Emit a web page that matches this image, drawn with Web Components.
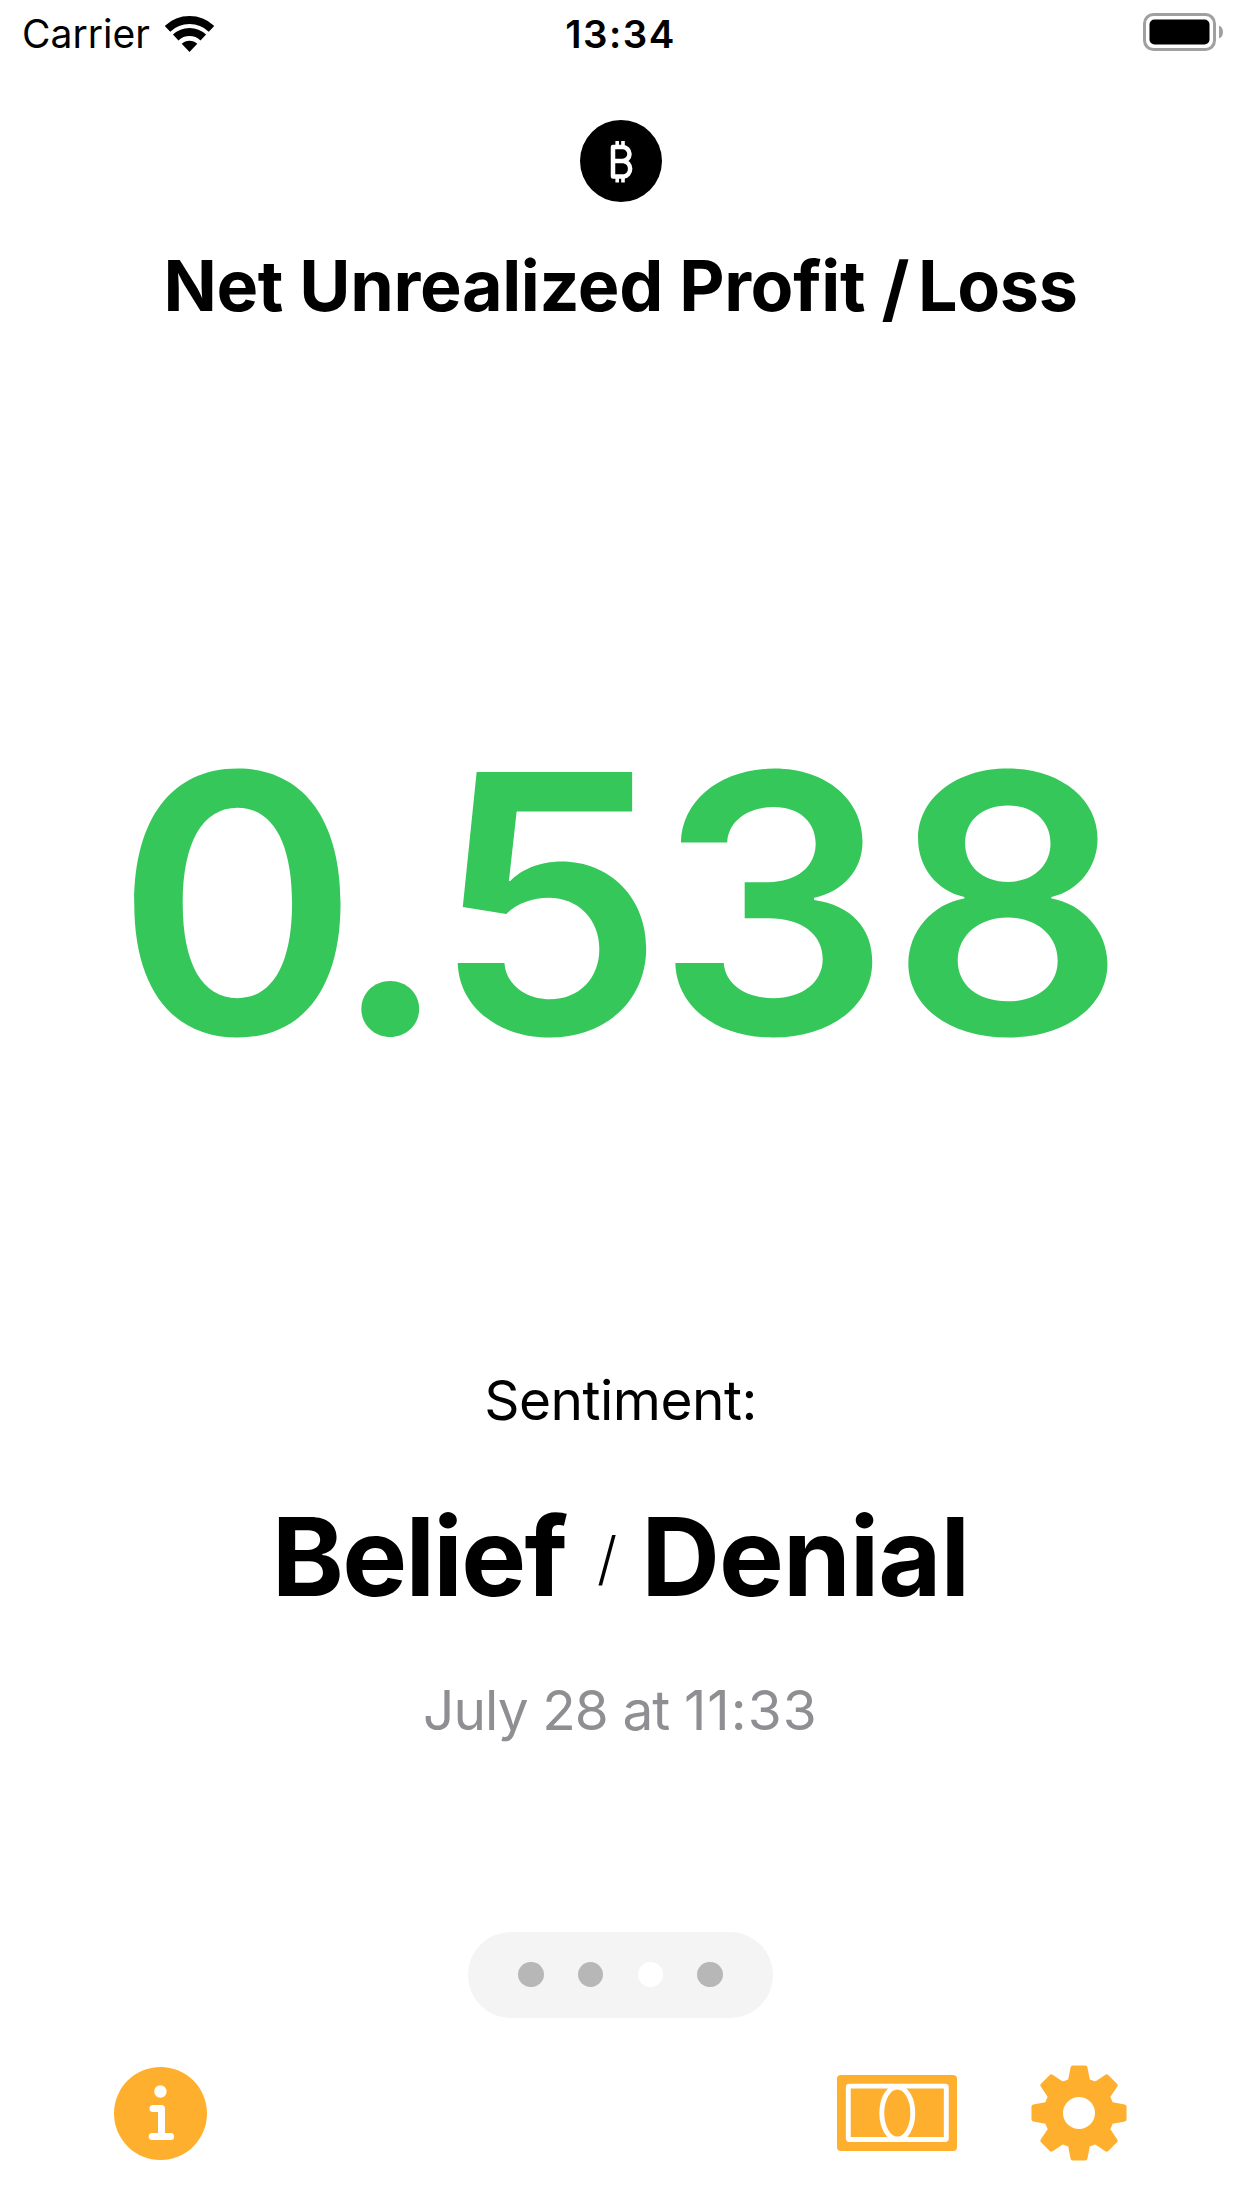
<!DOCTYPE html>
<html lang="en">
<head>
<meta charset="utf-8">
<title>Net Unrealized Profit / Loss</title>
<style>
  body {
    margin: 0;
    background: #ffffff;
    color: #000000;
    font-family: Inter, "Liberation Sans", sans-serif;
  }
</style>
</head>
<body>
<nupl-app></nupl-app>

<script>
class StatusBar extends HTMLElement {
  constructor() {
    super();
    this._shadowRoot = this.attachShadow({ mode: "open" });
  }

  connectedCallback() {
    this._shadowRoot.innerHTML = `
      <style>
        :host {
          display: grid;
          grid-template-columns: 1fr auto 1fr;
          align-items: center;
          height: 68px;
          padding: 0 18px;
          box-sizing: border-box;
          line-height: 68px;
        }
        .left {
          display: flex;
          align-items: center;
          gap: 15px;
          padding-left: 4px;
          font-size: 39px;
        }
        .left svg { margin-bottom: 2px; }
        .time {
          font-size: 38.5px;
          font-weight: 600;
          letter-spacing: 1.5px;
        }
        .battery {
          justify-self: end;
          margin-bottom: 4px;
        }
        svg { display: block; }
      </style>
      <div class="left">
        <span><slot name="carrier"></slot></span>
        <svg width="49" height="37" viewBox="0 0 49 37">
          <g fill="none" stroke="#000" stroke-width="8">
            <path d="M2.5 13.8A32 32 0 0 1 46.5 13.8"/>
            <path d="M10.7 22.5A20 20 0 0 1 38.3 22.5"/>
          </g>
          <path d="M24.5 37L16.7 28.8A11.3 11.3 0 0 1 32.3 28.8Z"/>
        </svg>
      </div>
      <span class="time"><slot name="time"></slot></span>
      <svg class="battery" width="80" height="38" viewBox="0 0 80 38">
        <rect x="1.5" y="1.5" width="70" height="35" rx="9" fill="none" stroke="#a0a0a0" stroke-width="3"/>
        <rect x="6.5" y="6.5" width="60" height="25" rx="5"/>
        <path d="M76 12.5Q80 14 80 19T76 25.5Z" fill="#a0a0a0"/>
      </svg>
    `;
  }
}

class CoinBadge extends HTMLElement {
  constructor() {
    super();
    this._shadowRoot = this.attachShadow({ mode: "open" });
  }

  connectedCallback() {
    this._shadowRoot.innerHTML = `
      <style>
        :host { display: block; width: 82px; height: 82px; }
        svg { display: block; }
      </style>
      <svg width="82" height="82" viewBox="0 0 82 82">
        <circle cx="41" cy="41" r="41"/>
        <g fill="none" stroke="#fff" stroke-width="4.5" stroke-linejoin="round">
          <path d="M33 27H42.5A6.9 6.9 0 0 1 42.5 41H33ZM33 41H43.5A7.9 7.9 0 0 1 43.5 56.6H33Z"/>
          <path d="M37.2 21V27M43 21V27M37.2 56.5V62.5M43 56.5V62.5" stroke-width="3.6"/>
        </g>
      </svg>
    `;
  }
}

const DIGIT_SPACING = { "0": -27, ".": -16, "5": -8.5, "3": -1, "8": 0 };

class ScoreValue extends HTMLElement {
  constructor() {
    super();
    this._shadowRoot = this.attachShadow({ mode: "open" });
  }

  connectedCallback() {
    const digits = [...this.getAttribute("value")]
      .map((d) => `<span style="letter-spacing: ${DIGIT_SPACING[d] || 0}px">${d}</span>`)
      .join("");
    this._shadowRoot.innerHTML = `
      <style>
        :host {
          display: block;
          color: #35c759;
          font-size: 360px;
          font-weight: 560;
          line-height: 360px;
          font-kerning: none;
          white-space: nowrap;
          transform: scaleX(1.025);
        }
      </style>
      <div>${digits}</div>
    `;
  }
}

class SentimentPair extends HTMLElement {
  constructor() {
    super();
    this._shadowRoot = this.attachShadow({ mode: "open" });
  }

  connectedCallback() {
    this._shadowRoot.innerHTML = `
      <style>
        :host {
          display: flex;
          align-items: center;
          font-size: 109px;
          font-weight: 700;
          line-height: 120px;
        }
        .from { letter-spacing: -1.7px; }
        .to { letter-spacing: -1px; }
        .slash {
          font-size: 58px;
          font-weight: 350;
          line-height: 60px;
          margin: 4px 24px 0 31px;
        }
      </style>
      <span class="from"><slot name="from"></slot></span>
      <span class="slash">/</span>
      <span class="to"><slot name="to"></slot></span>
    `;
  }
}

class PageDots extends HTMLElement {
  constructor() {
    super();
    this._shadowRoot = this.attachShadow({ mode: "open" });
  }

  connectedCallback() {
    const count = Number(this.getAttribute("count"));
    const current = Number(this.getAttribute("current"));
    let dots = "";
    for (let i = 0; i < count; i++) {
      dots += `<i class="${i === current ? "on" : ""}"></i>`;
    }
    this._shadowRoot.innerHTML = `
      <style>
        :host {
          display: flex;
          align-items: center;
          justify-content: center;
          gap: 34.3px;
          width: 305px;
          height: 86px;
          border-radius: 43px;
          background: #f4f4f4;
        }
        i {
          width: 25.3px;
          height: 25.3px;
          border-radius: 50%;
          background: #b7b7b7;
        }
        i.on { background: #ffffff; }
      </style>
      ${dots}
    `;
  }
}

class ToolBar extends HTMLElement {
  constructor() {
    super();
    this._shadowRoot = this.attachShadow({ mode: "open" });
  }

  // outline of the eight-toothed gear, centred on 48,48
  gearPath() {
    const tooth = [[-8.8, -32], [-6.2, -45.3], [6.2, -45.3], [8.8, -32]];
    const points = [];
    for (let k = 0; k < 8; k++) {
      const a = (k * Math.PI) / 4;
      for (const [x, y] of tooth) {
        const px = 48 + x * Math.cos(a) - y * Math.sin(a);
        const py = 48 + x * Math.sin(a) + y * Math.cos(a);
        points.push(px.toFixed(2) + " " + py.toFixed(2));
      }
    }
    return "M" + points.join("L") + "Z";
  }

  connectedCallback() {
    this._shadowRoot.innerHTML = `
      <style>
        :host {
          --tint: #ffaf2e;
          display: flex;
          align-items: center;
          justify-content: space-between;
          height: 96px;
          padding: 0 114.5px 0 114px;
        }
        .right {
          display: flex;
          align-items: center;
          gap: 73.5px;
        }
        svg { display: block; fill: var(--tint); }
      </style>
      <svg width="93" height="93" viewBox="0 0 93 93">
        <circle cx="46.5" cy="46.5" r="46.5"/>
        <circle cx="46.4" cy="24.5" r="6.2" fill="#fff"/>
        <path d="M39 41.5H47.5V69.5M38.2 69.5H56.6" fill="none" stroke="#fff" stroke-width="7" stroke-linecap="round" stroke-linejoin="round"/>
      </svg>
      <div class="right">
        <svg width="120" height="76" viewBox="0 0 120 76">
          <rect width="120" height="76" rx="4"/>
          <g stroke="#fff" stroke-width="4.9">
            <rect x="11.3" y="11.1" width="98" height="53.4" rx="1" fill="none"/>
            <ellipse cx="60.3" cy="38" rx="15.5" ry="26"/>
          </g>
        </svg>
        <svg width="96" height="96" viewBox="0 0 96 96">
          <path d="${this.gearPath()}" stroke="#ffaf2e" stroke-width="4.5" stroke-linejoin="round"/>
          <circle cx="48" cy="48" r="16" fill="#fff"/>
        </svg>
      </div>
    `;
  }
}

class NuplApp extends HTMLElement {
  constructor() {
    super();
    this._shadowRoot = this.attachShadow({ mode: "open" });
  }

  connectedCallback() {
    this._shadowRoot.innerHTML = `
      <style>
        :host {
          display: flex;
          flex-direction: column;
          align-items: center;
          width: 1242px;
          height: 2208px;
          padding-right: 1px;
          box-sizing: border-box;
          overflow: hidden;
        }
        status-bar, tool-bar { align-self: stretch; }
        coin-badge { margin-top: 51.5px; }
        h1 {
          margin: 44px 0 0;
          font-size: 70px;
          font-weight: 700;
          line-height: 80px;
          letter-spacing: -0.35px;
          white-space: nowrap;
        }
        h1 span {
          font-size: 72px;
          line-height: 0;
          letter-spacing: -4.2px;
          vertical-align: -3px;
        }
        score-value { margin-top: 397.5px; }
        .label {
          margin-top: 287px;
          font-size: 55px;
          line-height: 60px;
          letter-spacing: -0.5px;
        }
        sentiment-pair { margin-top: 65.5px; }
        .date {
          margin-top: 64.5px;
          color: #8e8e93;
          font-size: 55px;
          line-height: 60px;
          letter-spacing: -0.95px;
        }
        .date span { letter-spacing: 1.1px; }
        page-dots { margin-top: 191.5px; }
        tool-bar { margin-top: 47.5px; }
      </style>
      <status-bar>
        <span slot="carrier">Carrier</span>
        <span slot="time">13:34</span>
      </status-bar>
      <coin-badge></coin-badge>
      <h1>Net Unrealized Profit <span>/ </span>Loss</h1>
      <score-value value="0.538"></score-value>
      <div class="label">Sentiment:</div>
      <sentiment-pair>
        <span slot="from">Belief</span>
        <span slot="to">Denial</span>
      </sentiment-pair>
      <div class="date">July 28 at <span>11:33</span></div>
      <page-dots count="4" current="2"></page-dots>
      <tool-bar></tool-bar>
    `;
  }
}

customElements.define("status-bar", StatusBar);
customElements.define("coin-badge", CoinBadge);
customElements.define("score-value", ScoreValue);
customElements.define("sentiment-pair", SentimentPair);
customElements.define("page-dots", PageDots);
customElements.define("tool-bar", ToolBar);
customElements.define("nupl-app", NuplApp);
</script>
</body>
</html>
